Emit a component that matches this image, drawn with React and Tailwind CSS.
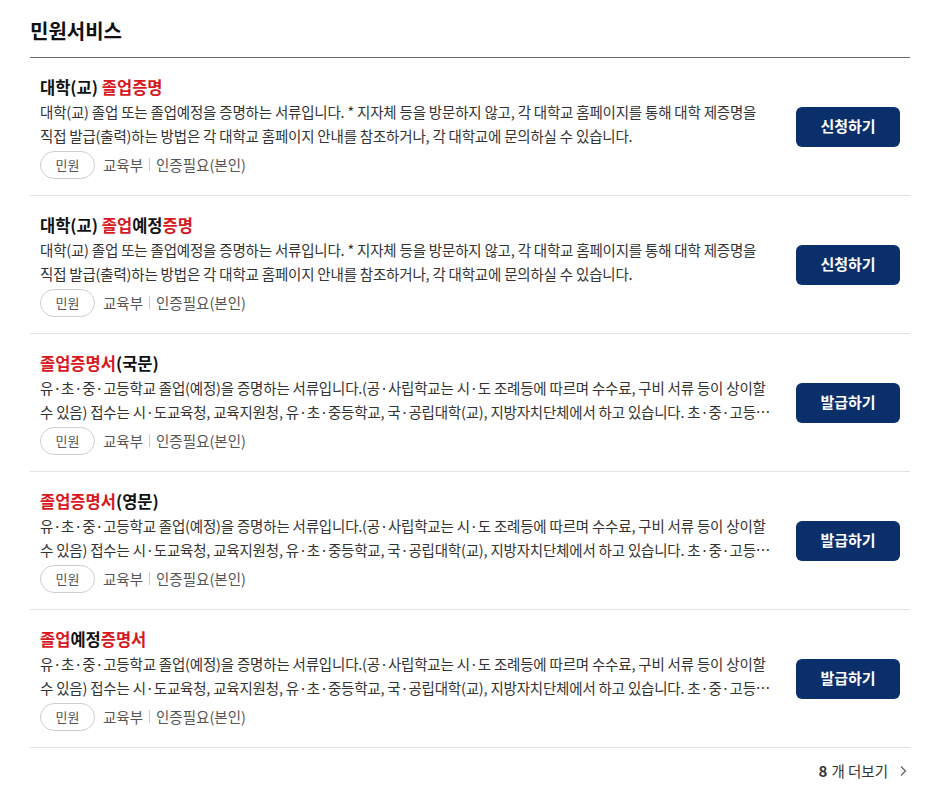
import React from 'react'

const DESC_UNIV = '대학(교) 졸업 또는 졸업예정을 증명하는 서류입니다. * 지자체 등을 방문하지 않고, 각 대학교 홈페이지를 통해 대학 제증명을 직접 발급(출력)하는 방법은 각 대학교 홈페이지 안내를 참조하거나, 각 대학교에 문의하실 수 있습니다.'
const DESC_SCHOOL = '유·초·중·고등학교 졸업(예정)을 증명하는 서류입니다.(공·사립학교는 시·도 조례등에 따르며 수수료, 구비 서류 등이 상이할 수 있음) 접수는 시·도교육청, 교육지원청, 유·초·중등학교, 국·공립대학(교), 지방자치단체에서 하고 있습니다. 초·중·고등학교 졸업증명서는 정부24에서 발급받으실 수 있습니다.'

const items = [
  { title: [['대학(교) ', false], ['졸업증명', true]], desc: DESC_UNIV, keep: true, action: '신청하기' },
  { title: [['대학(교) ', false], ['졸업', true], ['예정', false], ['증명', true]], desc: DESC_UNIV, keep: true, action: '신청하기' },
  { title: [['졸업증명서', true], ['(국문)', false]], desc: DESC_SCHOOL, action: '발급하기' },
  { title: [['졸업증명서', true], ['(영문)', false]], desc: DESC_SCHOOL, action: '발급하기' },
  { title: [['졸업', true], ['예정', false], ['증명서', true]], desc: DESC_SCHOOL, action: '발급하기' },
]

const ServiceItem = ({ item }) => (
  <li className="flex items-center gap-5 border-b border-[#e2e2e2] px-[10px] h-[138px]">
    <div className="flex-1 min-w-0">
      <h3 className="text-[16.5px] font-bold leading-[24px] text-[#111]">
        {item.title.map(([t, hl], i) => (
          <span key={i} className={hl ? 'text-[#d7191f]' : ''}>{t}</span>
        ))}
      </h3>
      <p className={`mt-[1px] text-[14.5px] leading-[24px] text-[#333] line-clamp-2 tracking-[-0.2px] ${item.keep ? 'break-keep' : 'break-all'}`}>
        {item.desc}
      </p>
      <div className="mt-[3px] flex items-center text-[14.5px] text-[#555]">
        <span className="inline-flex items-center justify-center w-[55px] h-[28px] rounded-full border border-[#cfcfcf] text-[13px] text-[#555]">민원</span>
        <span className="ml-2">교육부</span>
        <span className="mx-[6px] h-[13px] w-px bg-[#ccc]"></span>
        <span>인증필요(본인)</span>
      </div>
    </div>
    <button className="w-[104px] h-[40px] shrink-0 rounded-md bg-[#0b2f6b] text-white text-[15px] font-bold">
      {item.action}
    </button>
  </li>
)

export default function App() {
  return (
    <div className="min-h-screen bg-white" style={{ fontFamily: '"Noto Sans CJK KR", "Noto Sans", sans-serif' }}>
      <div className="px-[30px] w-[910px] pr-0">
        <h2 className="pt-[16px] pb-[11px] text-[20px] font-bold leading-[30px] text-[#111]">민원서비스</h2>
        <ul className="border-t border-[#666]">
          {items.map((item, i) => (
            <ServiceItem key={i} item={item} />
          ))}
        </ul>
        <div className="flex justify-end items-center pt-[12px] pr-[2px] text-[14.5px] text-[#333]">
          <span className="font-bold text-[15px]">8</span>
          <span className="ml-1">개 더보기</span>
          <svg className="ml-[10px]" width="10" height="12" viewBox="0 0 10 12" fill="none" stroke="#666" strokeWidth="1.3">
            <path d="M3 1.5 L7.5 6 L3 10.5" />
          </svg>
        </div>
      </div>
    </div>
  )
}
